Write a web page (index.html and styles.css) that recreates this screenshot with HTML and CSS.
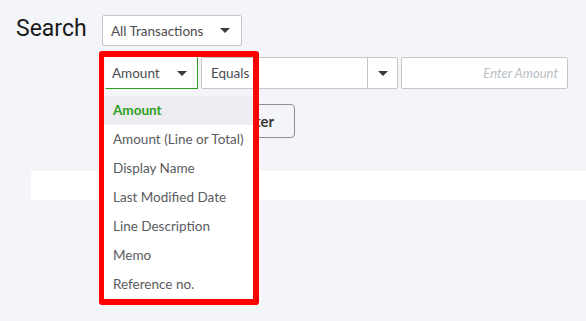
FILE: index.html
```html
<!DOCTYPE html>
<html lang="en">
<head>
  <meta charset="UTF-8" />
  <meta name="viewport" content="width=device-width, initial-scale=1.0"/>
  <title>Search - Transactions</title>
  <link rel="stylesheet" href="styles.css">
</head>
<body>

  <div class="page">
    <div class="top-row">
      <h1>Search</h1>
      <div class="select type-select">
        <span>All Transactions</span>
        <span class="caret"></span>
      </div>
    </div>

    <div class="filter-row">
      <div class="field-wrap">
        <div class="select field-select">
          <span>Amount</span>
          <span class="caret"></span>
        </div>
        <ul class="menu">
          <li class="active">Amount</li>
          <li>Amount (Line or Total)</li>
          <li>Display Name</li>
          <li>Last Modified Date</li>
          <li>Line Description</li>
          <li>Memo</li>
          <li>Reference no.</li>
        </ul>
      </div>
      <div class="select op-select">
        <span>Equals</span>
        <span class="op-btn"><span class="caret"></span></span>
      </div>
      <div class="amount-input">Enter Amount</div>
    </div>

    <div class="button-row">
      <button>Filter</button>
    </div>

    <div class="results"></div>

    <div class="highlight"></div>
  </div>

</body>
</html>
```

FILE: styles.css
```css
body {
  margin: 0;
  background: #f4f5f8;
  font-family: Lato, sans-serif;
  color: #393a3d;
}
.page {
  position: relative;
  height: 321px;
  overflow: hidden;
}
.top-row {
  display: flex;
  align-items: center;
  padding: 15px 0 0 16px;
}
h1 {
  width: 86px;
  margin: -4px 0 0 0;
  font-family: Roboto, sans-serif;
  font-weight: 400;
  font-size: 23px;
  color: #1a1a1a;
}
.select {
  display: flex;
  align-items: center;
  justify-content: space-between;
  box-sizing: border-box;
  height: 31px;
  background: white;
  border: 1px solid #c4c6ca;
  border-radius: 2px;
  font-size: 13.5px;
  color: #4b4c50;
  padding: 0 10px 0 8px;
}
.caret {
  width: 0;
  height: 0;
  border-left: 5px solid transparent;
  border-right: 5px solid transparent;
  border-top: 5px solid #393a3d;
}
.type-select {
  width: 140px;
  padding-right: 11px;
}
.filter-row {
  display: flex;
  gap: 3px;
  margin: 11px 0 0 105px;
}
.field-wrap {
  position: relative;
}
.field-select {
  width: 93px;
  height: 32px;
  border-color: transparent #2ca01c #2ca01c transparent;
  border-radius: 0;
  padding: 0 10px 0 6px;
}
.menu {
  position: absolute;
  top: 39px;
  left: -1px;
  width: 149px;
  margin: 0;
  padding: 0;
  list-style: none;
  background: white;
  z-index: 2;
}
.menu li {
  height: 29px;
  line-height: 29px;
  padding-left: 9px;
  font-size: 13.5px;
  color: #5a5b60;
}
.menu li.active {
  background: #ececf1;
  color: #2ca01c;
  font-weight: bold;
}
.op-select {
  width: 197px;
  height: 32px;
  padding: 0 0 0 9px;
}
.op-btn {
  display: flex;
  align-items: center;
  justify-content: center;
  width: 29px;
  height: 100%;
  border-left: 1px solid #c4c6ca;
}
.amount-input {
  box-sizing: border-box;
  width: 167px;
  height: 32px;
  line-height: 30px;
  background: white;
  border: 1px solid #c4c6ca;
  border-radius: 2px;
  text-align: right;
  padding-right: 9px;
  font-size: 13px;
  font-style: italic;
  color: #babec5;
}
.button-row {
  margin: 15px 0 0 218px;
}
button {
  box-sizing: border-box;
  width: 77px;
  height: 34px;
  background: transparent;
  border: 1px solid #8d9096;
  border-radius: 4px;
  font-family: Lato, sans-serif;
  font-weight: bold;
  font-size: 15px;
  color: #393a3d;
}
.results {
  margin: 33px 0 0 31px;
  height: 29px;
  background: white;
}
.highlight {
  position: absolute;
  left: 99px;
  top: 51px;
  width: 160px;
  height: 254px;
  box-sizing: border-box;
  border: 6px solid #ff0000;
  border-left-width: 5px;
  border-radius: 3px;
  z-index: 3;
}
```
